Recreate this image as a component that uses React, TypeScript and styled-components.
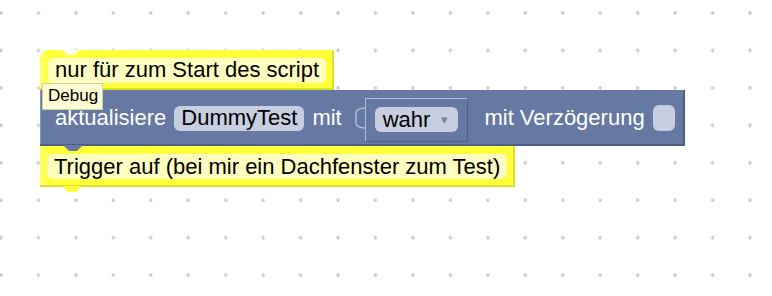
import React from "react";
import styled, { createGlobalStyle } from "styled-components";

const GlobalStyle = createGlobalStyle`
  body {
    margin: 0;
    background: #fff;
    font-family: "Liberation Sans", Arial, sans-serif;
  }
`;

const GRID = 37.45;

export default function App() {
  return (
    <>
      <GlobalStyle />
      <Workspace>
        <Grid>
          <defs>
            <pattern
              id="dots"
              width={GRID}
              height={GRID}
              x={1 - GRID / 2}
              y={13 - GRID / 2}
              patternUnits="userSpaceOnUse"
            >
              <path
                d={`M${GRID / 2 - 2},${GRID / 2} h4 M${GRID / 2},${GRID / 2 - 2} v4`}
                stroke="#bdbdbd"
                strokeWidth="1.2"
              />
            </pattern>
          </defs>
          <rect width="100%" height="100%" fill="url(#dots)" />
        </Grid>

        <Stack>
          <YellowBlock $first>
            <TopNotch viewBox="0 0 18 6">
              <path d="M0,0 L6,5 H12 L18,0 Z" fill="#fff" />
            </TopNotch>
            <Field $tone="yellow">nur für zum Start des script</Field>
          </YellowBlock>

          <BlueBlock>
            <DebugTag>Debug</DebugTag>
            <Label>aktualisiere</Label>
            <Field $tone="blue">DummyTest</Field>
            <Label>mit</Label>
            <Socket>
              <SocketTab viewBox="0 0 14 26">
                <path
                  d="M14,3 C6,3 3,5 3,8 V18 C3,21 6,23 14,23"
                  fill="none"
                  stroke="#aebbd6"
                  strokeWidth="1.5"
                />
              </SocketTab>
              <PluggedBlock>
                <Field $tone="blue">
                  wahr
                  <Caret>▾</Caret>
                </Field>
              </PluggedBlock>
            </Socket>
            <Label $wide>mit Verzögerung</Label>
            <Checkbox />
            <BottomTab viewBox="0 0 20 7">
              <path d="M0,0 L6,6 H14 L20,0 Z" fill="#6579a2" />
            </BottomTab>
          </BlueBlock>

          <YellowBlock>
            <Field $tone="yellow">Trigger auf (bei mir ein Dachfenster zum Test)</Field>
            <BottomTab viewBox="0 0 20 7" $yellow>
              <path d="M0,0 L6,6 H14 L20,0 Z" fill="#ffff3a" />
            </BottomTab>
          </YellowBlock>
        </Stack>
      </Workspace>
    </>
  );
}

const Workspace = styled.div`
  position: relative;
  width: 772px;
  height: 296px;
  overflow: hidden;
  background: #fff;
`;

const Grid = styled.svg`
  position: absolute;
  inset: 0;
  width: 100%;
  height: 100%;
`;

const Stack = styled.div`
  position: absolute;
  left: 40px;
  top: 50px;
  display: flex;
  flex-direction: column;
  align-items: flex-start;
`;

const YellowBlock = styled.div<{ $first?: boolean }>`
  position: relative;
  display: flex;
  align-items: center;
  height: ${(p) => (p.$first ? "40px" : "41px")};
  padding: 0 8px 0 ${(p) => (p.$first ? "8px" : "7px")};
  background: linear-gradient(90deg, #ffff66 0, #ffff3a 10px, #ffff3a 100%);
  border-radius: ${(p) => (p.$first ? "8px 0 0 0" : "0")};
  box-shadow: inset -2px -2px 0 #dede2c;
`;

const TopNotch = styled.svg`
  position: absolute;
  top: 0;
  left: 22px;
  width: 18px;
  height: 6px;
`;

const BottomTab = styled.svg<{ $yellow?: boolean }>`
  position: absolute;
  left: ${(p) => (p.$yellow ? "22px" : "23px")};
  bottom: -6px;
  width: 20px;
  height: 7px;
  z-index: 2;
`;

const Field = styled.div<{ $tone: "yellow" | "blue" }>`
  display: flex;
  align-items: center;
  height: 25px;
  padding: 0 7px;
  border-radius: 6px;
  font-size: 22px;
  color: #000;
  white-space: nowrap;
  background: ${(p) => (p.$tone === "yellow" ? "#ffffc2" : "#c6cee0")};
`;

const BlueBlock = styled.div`
  position: relative;
  display: flex;
  align-items: center;
  gap: 8px;
  height: 56px;
  padding: 0 10px 0 15px;
  box-sizing: border-box;
  background: #6579a2;
  box-shadow: inset -2px -2px 0 #4e5f86, inset 1px 0 0 #8395bb;
  z-index: 1;
`;

const Label = styled.span<{ $wide?: boolean }>`
  font-size: 22px;
  color: #fff;
  white-space: nowrap;
  margin-left: ${(p) => (p.$wide ? "8px" : "0")};
`;

const DebugTag = styled.div`
  position: absolute;
  left: 2px;
  top: -7px;
  padding: 2px 4px 3px 5px;
  font-size: 17px;
  color: #000;
  background: #fffbd2;
  border: 1px solid #d2cfa2;
  z-index: 3;
`;

const Socket = styled.div`
  display: flex;
  align-items: center;
  margin-left: 3px;
`;

const SocketTab = styled.svg`
  width: 14px;
  height: 26px;
  margin-right: -2px;
`;

const PluggedBlock = styled.div`
  display: flex;
  align-items: center;
  height: 44px;
  padding: 0 9px 0 9px;
  box-sizing: border-box;
  background: #6579a2;
  border-top: 1px solid #aebbd6;
  border-left: 1px solid #aebbd6;
  border-right: 1px solid #4e5f86;
  border-bottom: 1px solid #4e5f86;
  margin-top: 3px;

  ${Field} {
    padding: 0 10px 0 8px;
  }
`;

const Caret = styled.span`
  margin-left: 11px;
  font-size: 13px;
  color: #6d7fa8;
`;

const Checkbox = styled.div`
  width: 22px;
  height: 26px;
  border-radius: 6px;
  background: #c6cee0;
  margin-left: 0;
`;
